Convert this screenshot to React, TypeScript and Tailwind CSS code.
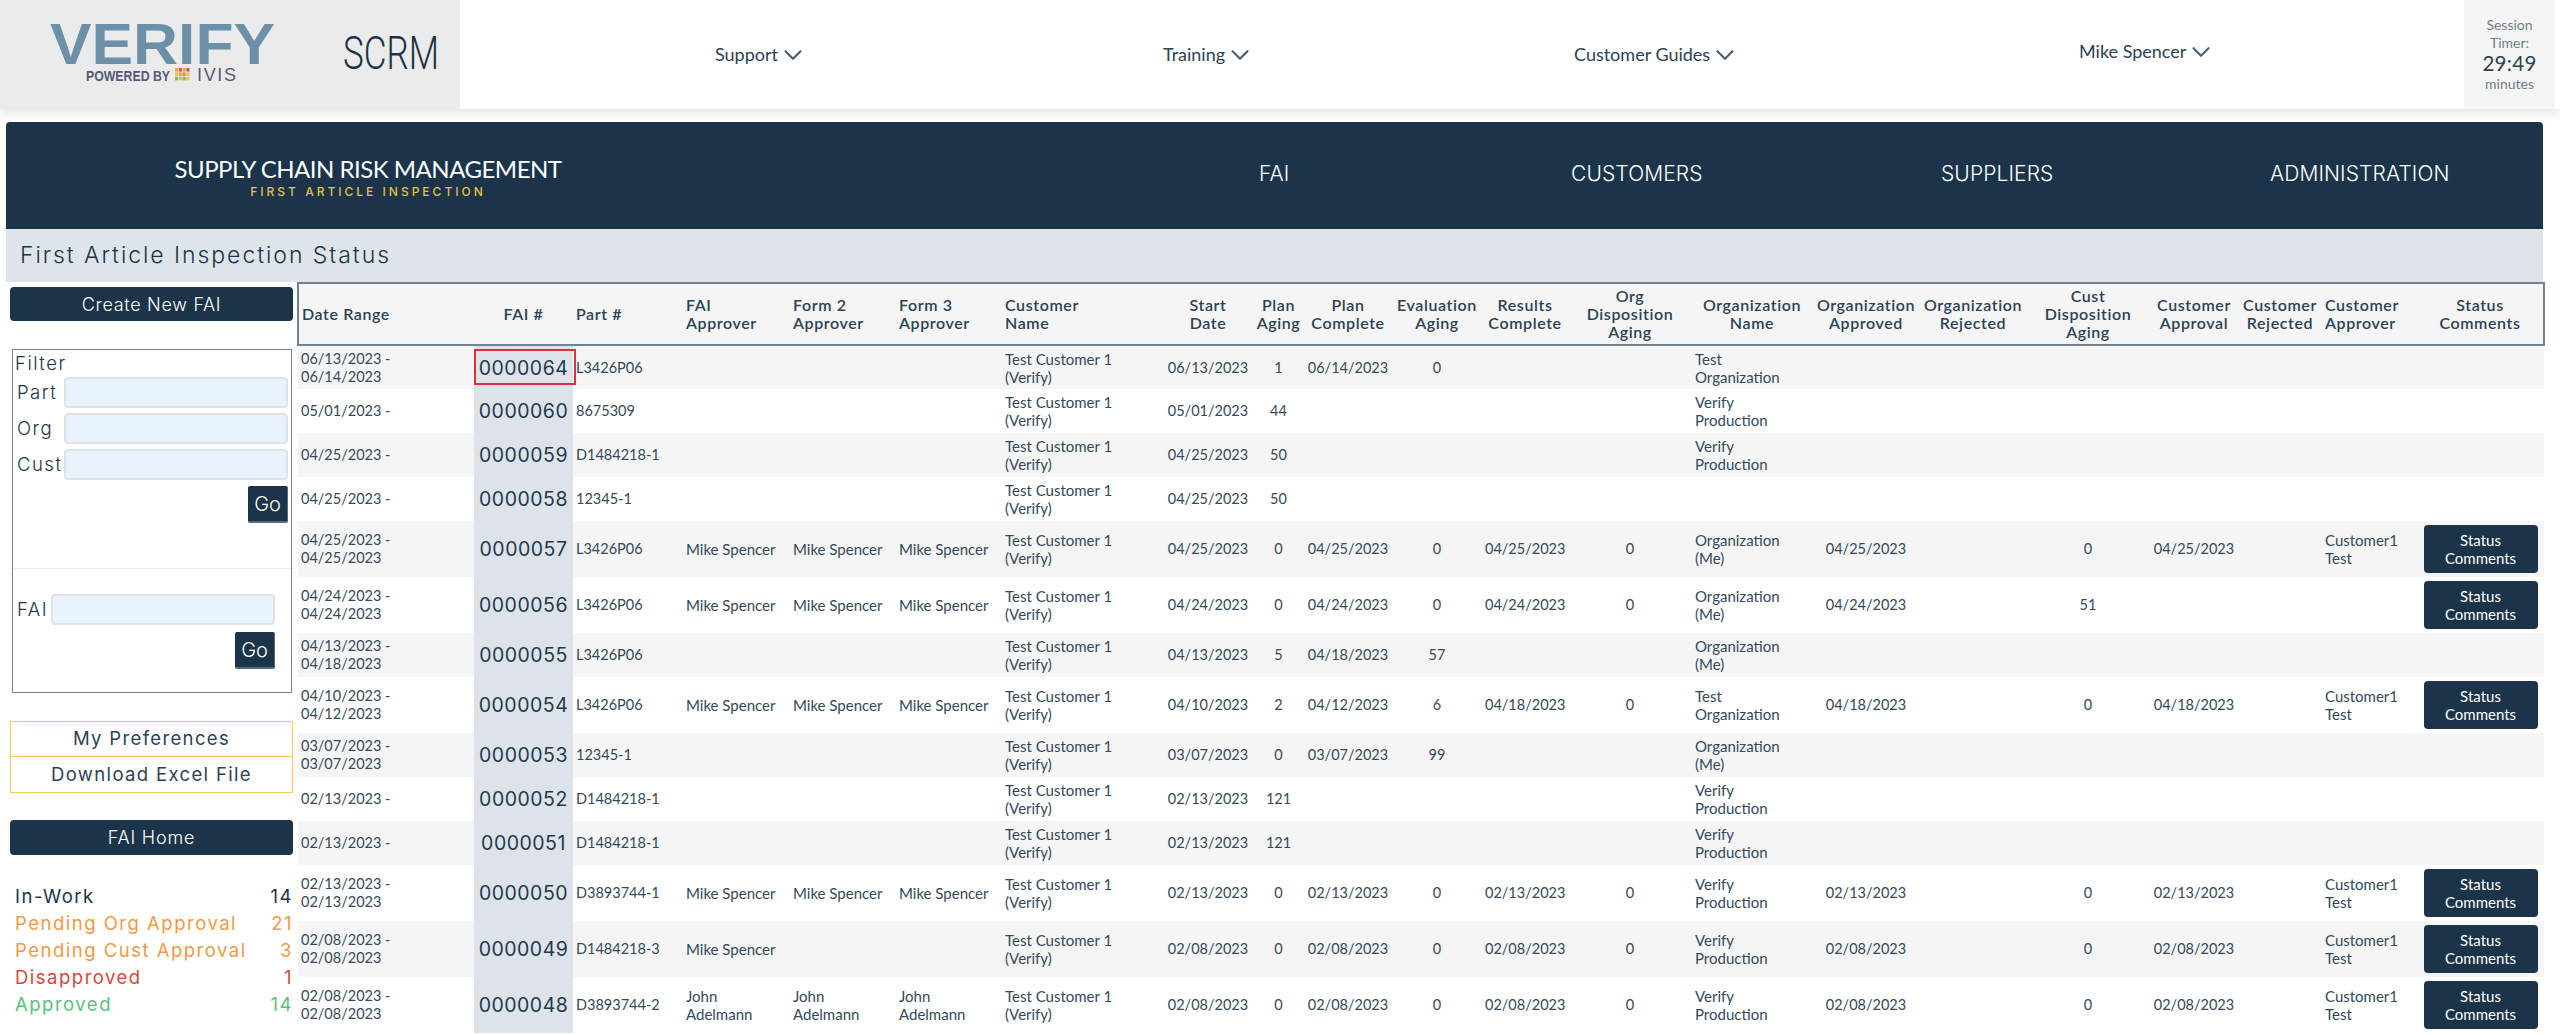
import { ChevronDown } from "lucide-react";

const colClasses = [
    "w-[176px]", "w-[99px]", "w-[110px]", "w-[107px]", "w-[106px]", "w-[106px]", "w-[161px]", "w-[90px]",
    "w-[51px]", "w-[88px]", "w-[90px]", "w-[86px]", "w-[124px]", "w-[120px]", "w-[108px]", "w-[106px]",
    "w-[124px]", "w-[88px]", "w-[84px]", "w-[95px]", "w-[127px]",
];

const headers: { label: string; left?: boolean }[] = [
    { label: "Date Range", left: true },
    { label: "FAI #" },
    { label: "Part #", left: true },
    { label: "FAI\nApprover", left: true },
    { label: "Form 2\nApprover", left: true },
    { label: "Form 3\nApprover", left: true },
    { label: "Customer\nName", left: true },
    { label: "Start\nDate" },
    { label: "Plan\nAging" },
    { label: "Plan\nComplete" },
    { label: "Evaluation\nAging" },
    { label: "Results\nComplete" },
    { label: "Org\nDisposition\nAging" },
    { label: "Organization\nName" },
    { label: "Organization\nApproved" },
    { label: "Organization\nRejected" },
    { label: "Cust\nDisposition\nAging" },
    { label: "Customer\nApproval" },
    { label: "Customer\nRejected" },
    { label: "Customer\nApprover", left: true },
    { label: "Status\nComments" },
];

interface Row {
    date: string;
    fai: string;
    part: string;
    approvers?: string[];
    start: string;
    planAging: string;
    planComplete?: string;
    evalAging?: string;
    results?: string;
    orgDisp?: string;
    org?: string;
    orgApproved?: string;
    custDisp?: string;
    custApproval?: string;
    custApprover?: string;
    button?: boolean;
}

const MS = "Mike Spencer";
const JA = "John\nAdelmann";
const CT = "Customer1\nTest";
const VP = "Verify\nProduction";
const OM = "Organization\n(Me)";

const rows: Row[] = [
    { date: "06/13/2023 -\n06/14/2023", fai: "0000064", part: "L3426P06", start: "06/13/2023", planAging: "1", planComplete: "06/14/2023", evalAging: "0", org: "Test\nOrganization" },
    { date: "05/01/2023 -", fai: "0000060", part: "8675309", start: "05/01/2023", planAging: "44", org: VP },
    { date: "04/25/2023 -", fai: "0000059", part: "D1484218-1", start: "04/25/2023", planAging: "50", org: VP },
    { date: "04/25/2023 -", fai: "0000058", part: "12345-1", start: "04/25/2023", planAging: "50" },
    { date: "04/25/2023 -\n04/25/2023", fai: "0000057", part: "L3426P06", approvers: [MS, MS, MS], start: "04/25/2023", planAging: "0", planComplete: "04/25/2023", evalAging: "0", results: "04/25/2023", orgDisp: "0", org: OM, orgApproved: "04/25/2023", custDisp: "0", custApproval: "04/25/2023", custApprover: CT, button: true },
    { date: "04/24/2023 -\n04/24/2023", fai: "0000056", part: "L3426P06", approvers: [MS, MS, MS], start: "04/24/2023", planAging: "0", planComplete: "04/24/2023", evalAging: "0", results: "04/24/2023", orgDisp: "0", org: OM, orgApproved: "04/24/2023", custDisp: "51", button: true },
    { date: "04/13/2023 -\n04/18/2023", fai: "0000055", part: "L3426P06", start: "04/13/2023", planAging: "5", planComplete: "04/18/2023", evalAging: "57", org: OM },
    { date: "04/10/2023 -\n04/12/2023", fai: "0000054", part: "L3426P06", approvers: [MS, MS, MS], start: "04/10/2023", planAging: "2", planComplete: "04/12/2023", evalAging: "6", results: "04/18/2023", orgDisp: "0", org: "Test\nOrganization", orgApproved: "04/18/2023", custDisp: "0", custApproval: "04/18/2023", custApprover: CT, button: true },
    { date: "03/07/2023 -\n03/07/2023", fai: "0000053", part: "12345-1", start: "03/07/2023", planAging: "0", planComplete: "03/07/2023", evalAging: "99", org: OM },
    { date: "02/13/2023 -", fai: "0000052", part: "D1484218-1", start: "02/13/2023", planAging: "121", org: VP },
    { date: "02/13/2023 -", fai: "0000051", part: "D1484218-1", start: "02/13/2023", planAging: "121", org: VP },
    { date: "02/13/2023 -\n02/13/2023", fai: "0000050", part: "D3893744-1", approvers: [MS, MS, MS], start: "02/13/2023", planAging: "0", planComplete: "02/13/2023", evalAging: "0", results: "02/13/2023", orgDisp: "0", org: VP, orgApproved: "02/13/2023", custDisp: "0", custApproval: "02/13/2023", custApprover: CT, button: true },
    { date: "02/08/2023 -\n02/08/2023", fai: "0000049", part: "D1484218-3", approvers: [MS], start: "02/08/2023", planAging: "0", planComplete: "02/08/2023", evalAging: "0", results: "02/08/2023", orgDisp: "0", org: VP, orgApproved: "02/08/2023", custDisp: "0", custApproval: "02/08/2023", custApprover: CT, button: true },
    { date: "02/08/2023 -\n02/08/2023", fai: "0000048", part: "D3893744-2", approvers: [JA, JA, JA], start: "02/08/2023", planAging: "0", planComplete: "02/08/2023", evalAging: "0", results: "02/08/2023", orgDisp: "0", org: VP, orgApproved: "02/08/2023", custDisp: "0", custApproval: "02/08/2023", custApprover: CT, button: true },
];

const stats = [
    { label: "In-Work", count: 14, color: "text-[#1b3449]" },
    { label: "Pending Org Approval", count: 21, color: "text-[#ef9a45]" },
    { label: "Pending Cust Approval", count: 3, color: "text-[#ef9a45]" },
    { label: "Disapproved", count: 1, color: "text-[#cf4a3c]" },
    { label: "Approved", count: 14, color: "text-[#5cbf7c]" },
];

function Logo() {
    const squares = ["#e8a33d", "#d9503f", "#e8a33d", "#d9503f", "#e8c33d", "#e8a33d", "#d9903d", "#e8c33d", "#8ab84a", "#c9c23f", "#8ab84a", "#e8c33d"];
    return (
        <svg width="460" height="109" viewBox="0 0 460 109">
            <text x="50" y="64" fontFamily="Liberation Sans" fontWeight="700" fontSize="57" fill="#6c90a8" textLength="225" lengthAdjust="spacingAndGlyphs">VERIFY</text>
            <text x="86" y="81" fontFamily="Liberation Sans" fontWeight="700" fontSize="14" fill="#565a7a" textLength="84" lengthAdjust="spacingAndGlyphs">POWERED BY</text>
            {squares.map((color, i) => (
                <rect key={i} x={175 + (i % 4) * 3.8} y={68 + Math.floor(i / 4) * 4.4} width="3" height="3.6" fill={color} />
            ))}
            <text x="197" y="81" fontFamily="Liberation Sans" fontWeight="400" fontSize="18" fill="#565a7a" textLength="39" lengthAdjust="spacing">IVIS</text>
            <text x="343" y="69" fontFamily="Roboto" fontWeight="300" fontSize="46" fill="#1b3449" textLength="96" lengthAdjust="spacingAndGlyphs">SCRM</text>
        </svg>
    );
}

function NavItem({ label, className }: { label: string; className: string }) {
    return (
        <div className={`flex items-center text-[18px] text-[#2c4254] ${className}`}>
            <span>{label}</span>
            <ChevronDown size={30} strokeWidth={1.7} className="text-[#4b5f70]" />
        </div>
    );
}

function GoButton() {
    return (
        <button className="w-[40px] h-[37px] rounded-[2px] bg-[#1b3449] border-b-2 border-r border-[#5a6a78] text-white text-[20px]">
            Go
        </button>
    );
}

function FilterField({ label, inputClass }: { label: string; inputClass: string }) {
    return (
        <div className="flex items-center justify-between h-[31px]">
            <span className="text-[18.5px] tracking-[1.5px] text-[#1b3449] pl-[3px]">{label}</span>
            <input className={`h-[31px] rounded-[4px] bg-[#e9f3fd] border-2 border-[#dfe3e6] ${inputClass}`} />
        </div>
    );
}

function Sidebar() {
    return (
        <aside className="w-[291px] shrink-0 pl-[4px] font-['Inter',sans-serif] font-light">
            <button className="mt-[5px] w-[283px] h-[34px] rounded-[4px] bg-[#1b3449] text-white text-[18px] tracking-[0.7px]">
                Create New FAI
            </button>

            <div className="mt-[28px] ml-[2px] w-[280px] h-[344px] border-[1.5px] border-[#6e8292] pl-[1px] pr-[3px]">
                <div className="h-[27px] flex items-center text-[18.5px] tracking-[1.5px] text-[#1b3449] pl-[1px]">Filter</div>
                <div className="flex flex-col gap-[5px]">
                    <FilterField label="Part" inputClass="w-[224px]" />
                    <FilterField label="Org" inputClass="w-[224px]" />
                    <FilterField label="Cust" inputClass="w-[224px]" />
                </div>
                <div className="mt-[6px] flex justify-end">
                    <GoButton />
                </div>
                <div className="mt-[45px] -mr-[3px] border-t border-[#e8ebee]" />
                <div className="mt-[25px] pr-[13px]">
                    <FilterField label="FAI" inputClass="w-[224px]" />
                    <div className="mt-[7px] flex justify-end">
                        <GoButton />
                    </div>
                </div>
            </div>

            <div className="mt-[28px] w-[283px] border border-[#f5c860] font-normal text-[#2c4254] text-[18.5px] tracking-[1.35px] text-center">
                <div className="h-[35px] flex items-center justify-center border-b border-[#f5c860]">My Preferences</div>
                <div className="h-[35px] flex items-center justify-center">Download Excel File</div>
            </div>

            <button className="mt-[27px] w-[283px] h-[35px] rounded-[4px] bg-[#1b3449] text-white text-[18px] tracking-[0.8px]">
                FAI Home
            </button>

            <div className="mt-[28px] pl-[5px] w-[283px] font-normal text-[18.5px] tracking-[1.5px]">
                {stats.map((s) => (
                    <div key={s.label} className={`h-[27px] flex items-center justify-between ${s.color}`}>
                        <span>{s.label}</span>
                        <span>{s.count}</span>
                    </div>
                ))}
            </div>
        </aside>
    );
}

function Cell({ children, center, wide, className = "" }: { children?: React.ReactNode; center?: boolean; wide?: boolean; className?: string }) {
    return (
        <td className={`whitespace-pre-line align-middle px-[3px] ${center ? "text-center" : "text-left"} ${wide ? "text-[15px]" : ""} ${className}`}>
            {children}
        </td>
    );
}

function StatusTable() {
    return (
        <table className="table-fixed border-collapse w-[2246px] text-[14.5px] leading-[18px] text-[#34495a]">
            <colgroup>
                {colClasses.map((c, i) => (
                    <col key={i} className={c} />
                ))}
            </colgroup>
            <thead>
                <tr className="h-[62px] bg-[#f5f5f6] border-2 border-[#6e8292]">
                    {headers.map((h) => (
                        <th
                            key={h.label}
                            className={`whitespace-pre-line align-middle px-[3px] text-[16px] font-semibold tracking-[0.6px] text-[#2c4254] ${h.left ? "text-left" : "text-center"}`}
                        >
                            {h.label}
                        </th>
                    ))}
                </tr>
            </thead>
            <tbody>
                {rows.map((r, i) => (
                    <tr key={r.fai} className={`${r.button ? "h-[56px]" : "h-[44px]"} ${i % 2 === 0 ? "bg-[#f5f5f6]" : "bg-white"}`}>
                        <Cell>{r.date}</Cell>
                        <td className="relative text-center align-middle bg-[#dde3e8] font-['Inter',sans-serif] font-normal text-[19.5px] tracking-[0.5px] text-[#1f3a50]">
                            {r.fai}
                            {i === 0 && (
                                <div className="absolute left-0 -right-[3px] top-[3px] h-[36px] border-2 border-[#d9333f]" />
                            )}
                        </td>
                        <Cell>{r.part}</Cell>
                        <Cell wide>{r.approvers?.[0]}</Cell>
                        <Cell wide>{r.approvers?.[1]}</Cell>
                        <Cell wide>{r.approvers?.[2]}</Cell>
                        <Cell wide>{"Test Customer 1\n(Verify)"}</Cell>
                        <Cell center>{r.start}</Cell>
                        <Cell center>{r.planAging}</Cell>
                        <Cell center>{r.planComplete}</Cell>
                        <Cell center>{r.evalAging}</Cell>
                        <Cell center>{r.results}</Cell>
                        <Cell center>{r.orgDisp}</Cell>
                        <Cell wide>{r.org}</Cell>
                        <Cell center>{r.orgApproved}</Cell>
                        <Cell center />
                        <Cell center>{r.custDisp}</Cell>
                        <Cell center>{r.custApproval}</Cell>
                        <Cell center />
                        <Cell wide>{r.custApprover}</Cell>
                        <Cell center>
                            {r.button && (
                                <button className="w-[114px] h-[48px] rounded-[4px] bg-[#1b3449] text-white text-[15px] leading-[18px]">
                                    Status
                                    <br />
                                    Comments
                                </button>
                            )}
                        </Cell>
                    </tr>
                ))}
            </tbody>
        </table>
    );
}

export default function App() {
    return (
        <div className="h-screen overflow-hidden bg-white font-['Lato',sans-serif]">
            <header className="h-[109px] flex shadow-[0_5px_10px_rgba(0,0,0,0.1)]">
                <div className="w-[460px] shrink-0 bg-[#ebebeb]">
                    <Logo />
                </div>
                <div className="flex-1 flex items-center pl-[255px]">
                    <NavItem label="Support" className="w-[448px]" />
                    <NavItem label="Training" className="w-[411px]" />
                    <NavItem label="Customer Guides" className="w-[505px]" />
                    <NavItem label="Mike Spencer" className="-mt-[6px]" />
                </div>
                <div className="w-[91px] shrink-0 mr-[5px] bg-[#f5f5f5] flex flex-col items-center pt-[16px] text-[14px] leading-[18px] text-[#6f7d88]">
                    <span>Session</span>
                    <span>Timer:</span>
                    <span className="text-[20.5px] leading-[22px] text-[#2c4254] tracking-[0.3px]">29:49</span>
                    <span className="mt-[1px]">minutes</span>
                </div>
            </header>

            <main className="mt-[13px] ml-[6px] w-[2537px]">
                <nav className="h-[107px] flex rounded-t-[4px] bg-[#1b3449] text-white">
                    <div className="w-[724px] shrink-0 pt-[29px] text-center whitespace-nowrap">
                        <div className="text-[24px] leading-[36px] tracking-[-0.5px]">SUPPLY CHAIN RISK MANAGEMENT</div>
                        <div className="-mt-[2px] font-['Inter',sans-serif] font-medium text-[12px] leading-[14px] tracking-[3px] text-[#e8bf3e]">
                            FIRST ARTICLE INSPECTION
                        </div>
                    </div>
                    <div className="flex items-center pb-[3px] font-['Inter',sans-serif] font-light text-[21px] tracking-[0.1px]">
                        <span className="ml-[529px] w-[312px]">FAI</span>
                        <span className="w-[370px]">CUSTOMERS</span>
                        <span className="w-[329px]">SUPPLIERS</span>
                        <span>ADMINISTRATION</span>
                    </div>
                </nav>

                <div className="h-[53px] flex items-center pl-[14px] bg-[#dfe4ea] font-['Inter',sans-serif] font-light text-[23px] tracking-[1.95px] text-[#1b3449]">
                    First Article Inspection Status
                </div>

                <div className="flex">
                    <Sidebar />
                    <StatusTable />
                </div>
            </main>
        </div>
    );
}
